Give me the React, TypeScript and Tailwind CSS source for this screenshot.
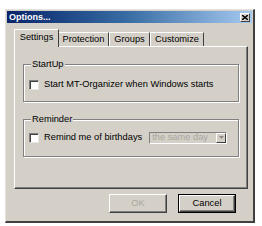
import React from "react";

const font = { fontFamily: '"Liberation Sans", Arial, sans-serif' };

function Checkbox() {
  return (
    <span className="w-[10px] h-[10px] shrink-0 bg-white border-t border-l border-[#808080] border-r border-b border-r-[#e8e6e2] border-b-[#e8e6e2] shadow-[inset_1px_1px_0_#404040]" />
  );
}

function Tab({ label, width, active }: { label: string; width: string; active?: boolean }) {
  if (active) {
    return (
      <div
        className={`${width} h-[18px] relative z-10 -mr-[1px] bg-[#d4d0c8] border-t border-l border-white border-r border-r-[#404040] flex items-center justify-center pb-[2px]`}
      >
        {label}
      </div>
    );
  }
  return (
    <div
      className={`${width} h-[15px] mt-[3px] bg-[#d4d0c8] border-t border-l border-white border-r border-r-[#404040] flex items-center justify-center`}
    >
      {label}
    </div>
  );
}

function GroupBox({ title, children }: { title: string; children: React.ReactNode }) {
  return (
    <div className="relative border border-[#808080] shadow-[1px_1px_0_#ffffff,inset_1px_1px_0_#ffffff] h-[38px] pl-[5px] pr-[4px] pt-[12px]">
      <span className="absolute -top-[7px] left-[7px] bg-[#d4d0c8] px-[1px] leading-[12px]">{title}</span>
      {children}
    </div>
  );
}

export default function App() {
  return (
    <div className="w-[262px] h-[226px] bg-white pt-[9px] pl-[5px] text-[9.3px] text-black" style={font}>
      <div className="w-[250px] h-[214px] bg-[#d4d0c8] border-t border-l border-[#e4e2de] border-r-2 border-b-2 border-r-[#404040] border-b-[#404040] p-[1px] flex flex-col">
        {/* title bar */}
        <div className="h-[12px] bg-gradient-to-r from-[#0a246a] via-[#3a6ea5] to-[#a6caf0] flex items-center justify-between pl-[2px] pr-[2px]">
          <span className="text-white font-bold text-[9px] leading-none">Options...</span>
          <span className="w-[10px] h-[9px] bg-[#d4d0c8] border-t border-l border-white border-r border-b border-r-[#404040] border-b-[#404040] flex items-center justify-center">
            <svg width="6" height="5" viewBox="0 0 6 5">
              <path d="M0 0 L6 5 M6 0 L0 5" stroke="#000" strokeWidth="1.4" />
            </svg>
          </span>
        </div>

        {/* tabs */}
        <div className="flex pl-[7px] mt-[6px]">
          <Tab label="Settings" width="w-[45px]" active />
          <Tab label="Protection" width="w-[51px]" />
          <Tab label="Groups" width="w-[41px]" />
          <Tab label="Customize" width="w-[54px]" />
        </div>

        {/* panel */}
        <div className="ml-[7px] w-[234px] h-[143px] -mt-[1px] border-t border-l border-white border-r border-b border-r-[#404040] border-b-[#404040] shadow-[inset_-1px_-1px_0_#808080] px-[8px] pt-[17px] flex flex-col gap-[17px]">
          <GroupBox title="StartUp">
            <div className="flex items-center gap-[5px] mt-[1px]">
              <Checkbox />
              <span className="whitespace-nowrap">Start MT-Organizer when Windows starts</span>
            </div>
          </GroupBox>
          <GroupBox title="Reminder">
            <div className="flex items-center gap-[5px] -mt-[1px] whitespace-nowrap">
              <Checkbox />
              <span>Remind me of&nbsp;birthdays</span>
              <div className="ml-[2px] w-[78px] shrink-0 h-[12px] bg-[#d4d0c8] border-t border-l border-[#808080] border-r border-b border-r-white border-b-white flex items-center">
                <span className="flex-1 text-[#a8a59e] pl-[2px] leading-none">the same day</span>
                <span className="w-[10px] h-[10px] bg-[#d4d0c8] border-t border-l border-white border-r border-b border-r-[#404040] border-b-[#404040] flex items-center justify-center">
                  <svg width="5" height="3" viewBox="0 0 5 3">
                    <path d="M0 0 H5 L2.5 3 Z" fill="#8a8780" />
                  </svg>
                </span>
              </div>
            </div>
          </GroupBox>
        </div>

        {/* buttons */}
        <div className="flex justify-end gap-[11px] pr-[16px] mt-[5px]">
          <div className="w-[58px] h-[19px] border-t border-l border-white border-r border-b border-r-[#404040] border-b-[#404040] shadow-[inset_-1px_-1px_0_#808080] flex items-center justify-center text-[#a8a59e]">
            OK
          </div>
          <div className="w-[58px] h-[19px] border border-black p-0">
            <div className="w-full h-full border-t border-l border-white border-r border-b border-r-[#404040] border-b-[#404040] shadow-[inset_-1px_-1px_0_#808080] flex items-center justify-center">
              Cancel
            </div>
          </div>
        </div>
      </div>
    </div>
  );
}
